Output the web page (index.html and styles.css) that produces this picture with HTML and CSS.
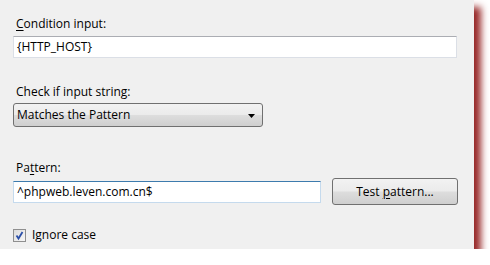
FILE: index.html
```html
<!DOCTYPE html>
<html>
<head>
<meta charset="utf-8">
<link rel="stylesheet" href="styles.css">
</head>
<body>
<div class="panel">
  <div class="label first"><u>C</u>ondition input:</div>
  <div class="textbox wide">{HTTP_HOST}</div>
  <div class="label second">Check if input string:</div>
  <div class="select">
    <span>Matches the Pattern</span>
    <svg class="arrow" width="7" height="4" viewBox="0 0 7 4"><path d="M0 0H7L3.5 4Z" fill="#000"/></svg>
  </div>
  <div class="label third">Pa<u>t</u>tern:</div>
  <div class="row">
    <div class="textbox focus">^phpweb.leven.com.cn$</div>
    <div class="button"><span>Test <u>p</u>attern...</span></div>
  </div>
  <div class="check-row">
    <span class="checkbox">
      <svg width="11" height="11" viewBox="0 0 11 11"><path d="M2.5 5.5 L4.5 8.5 L8.5 2" fill="none" stroke="#2b4fa8" stroke-width="1.8"/></svg>
    </span>
    <span class="check-label">Ignore case</span>
  </div>
</div>
</body>
</html>
```
FILE: styles.css
```css
html, body {
  margin: 0;
  padding: 0;
  background: #ffffff;
}
body {
  font-family: "Open Sans", "Noto Sans", sans-serif;
  font-size: 12px;
  color: #000;
}
.panel {
  width: 474px;
  height: 249px;
  box-sizing: border-box;
  background: #f0f0f0;
  box-shadow: 7px 7px 7px #982a2a;
  padding: 0 0 0 13px;
  display: flex;
  flex-direction: column;
  align-items: flex-start;
}
u { text-decoration: underline; text-underline-offset: 2px; }
.label {
  line-height: 16px;
  height: 16px;
  padding-left: 3px;
}
.first { margin-top: 16px; margin-bottom: 4px; }
.second { margin-top: 26px; margin-bottom: 3px; }
.third { margin-top: 33px; margin-bottom: 2px; }
.textbox {
  box-sizing: border-box;
  height: 22px;
  line-height: 20px;
  padding-left: 3px;
  background: #fff;
  border: 1px solid #dbdfe6;
  border-top-color: #abadb3;
  white-space: nowrap;
}
.wide { width: 444px; }
.select {
  box-sizing: border-box;
  width: 250px;
  height: 24px;
  border: 1px solid #707070;
  border-radius: 3px;
  background: linear-gradient(#f2f2f2 0%, #ebebeb 48%, #dddddd 52%, #cfcfcf 100%);
  display: flex;
  align-items: center;
  justify-content: space-between;
  padding: 0 7px 0 3px;
  line-height: 20px;
}
.arrow { display: block; margin-top: 1px; }
.row {
  display: flex;
  align-items: center;
  gap: 11px;
  width: 445px;
}
.focus {
  width: 308px;
  border-color: #c5daed;
  border-top-color: #3d7bad;
}
.button {
  box-sizing: border-box;
  width: 126px;
  height: 27px;
  border: 1px solid #707070;
  border-radius: 3px;
  background: linear-gradient(#f2f2f2 0%, #ebebeb 48%, #dddddd 52%, #cfcfcf 100%);
  display: flex;
  align-items: center;
  justify-content: center;
  white-space: pre;
}
.check-row {
  display: flex;
  align-items: center;
  gap: 6px;
  margin-top: 22px;
}
.checkbox {
  box-sizing: border-box;
  width: 13px;
  height: 13px;
  border: 1px solid #8f8f8f;
  background: linear-gradient(135deg, #dcdcdc, #f6f6f6);
  display: flex;
  align-items: center;
  justify-content: center;
}
.checkbox svg { display: block; }
.check-label { line-height: 16px; }
```
